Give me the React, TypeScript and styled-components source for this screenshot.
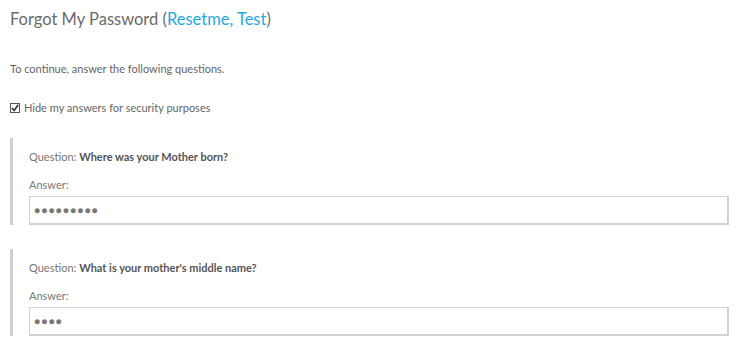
import React from "react";
import styled, { createGlobalStyle } from "styled-components";

const Global = createGlobalStyle`
  html, body { margin: 0; padding: 0; background: #fff; }
  body { font-family: "Lato", "Open Sans", sans-serif; color: #666; }
`;

const Page = styled.div`
  padding: 8px 11px 0 10px;
  display: flex;
  flex-direction: column;
`;

const Title = styled.h1`
  margin: 0;
  font-size: 16.5px;
  font-weight: 400;
  line-height: 22px;
  color: #6b6b6b;
`;

const Link = styled.a`
  color: #2aa8de;
  text-decoration: none;
`;

const Intro = styled.p`
  margin: 32px 0 0;
  font-size: 11px;
  line-height: 14px;
  color: #666;
`;

const CheckRow = styled.label`
  margin-top: 25px;
  display: flex;
  align-items: center;
  gap: 4px;
  font-size: 11px;
  line-height: 14px;
  color: #666;
`;

const Box = styled.span`
  width: 10px;
  height: 10px;
  box-sizing: border-box;
  border: 1px solid #555;
  display: flex;
  align-items: center;
  justify-content: center;
  background: #fff;
`;

const QuestionBlock = styled.div<{ $top: number }>`
  margin-top: ${(p) => p.$top}px;
  border-left: 3px solid #cfcfcf;
  padding: 12px 0 0 16px;
  display: flex;
  flex-direction: column;
`;

const QLine = styled.div`
  font-size: 11px;
  line-height: 14px;
  color: #777;
  b { color: #555; font-weight: 700; }
`;

const ALabel = styled.div`
  margin-top: 14px;
  font-size: 11px;
  line-height: 14px;
  color: #777;
`;

const Input = styled.div`
  margin-top: 4px;
  height: 29px;
  box-sizing: border-box;
  border: 1px solid #d2d2d2;
  border-right-width: 2px;
  border-bottom-width: 2px;
  display: flex;
  align-items: center;
  padding-left: 4px;
  font-size: 10px;
  letter-spacing: 1.2px;
  color: #777;
`;

const Dots = ({ n }: { n: number }) => <span>{"●".repeat(n)}</span>;

export default function App() {
  return (
    <>
      <Global />
      <Page>
        <Title>
          Forgot My Password (<Link>Resetme, Test</Link>)
        </Title>
        <Intro>To continue, answer the following questions.</Intro>
        <CheckRow>
          <Box>
            <svg width="8" height="8" viewBox="0 0 8 8">
              <path d="M1 4 L3.2 6.4 L7.2 0.8" stroke="#333" strokeWidth="1.6" fill="none" />
            </svg>
          </Box>
          Hide my answers for security purposes
        </CheckRow>
        <QuestionBlock $top={23}>
          <QLine>
            Question: <b>Where was your Mother born?</b>
          </QLine>
          <ALabel>Answer:</ALabel>
          <Input>
            <Dots n={9} />
          </Input>
        </QuestionBlock>
        <QuestionBlock $top={24}>
          <QLine>
            Question: <b>What is your mother's middle name?</b>
          </QLine>
          <ALabel>Answer:</ALabel>
          <Input>
            <Dots n={4} />
          </Input>
        </QuestionBlock>
      </Page>
    </>
  );
}
